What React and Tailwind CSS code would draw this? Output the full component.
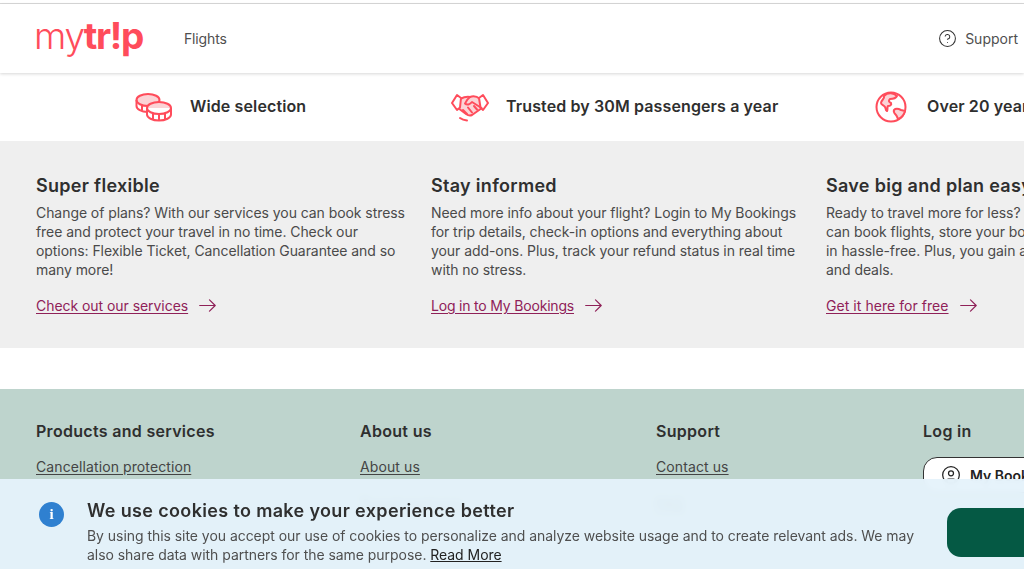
import React from "react";
import { CircleHelp, CircleUser } from "lucide-react";

const F = "font-['Inter','Liberation_Sans',sans-serif]";

function Coins() {
  return (
    <svg width="38" height="30" viewBox="0 0 38 30" fill="none" stroke="#ff4c5b" strokeWidth="2" strokeLinejoin="round">
      <ellipse cx="13" cy="8" rx="11.5" ry="6" fill="#fbd3d6" />
      <path d="M1.5 8v6c0 3.3 5 6 11 6 1 0 2 0 3-.2" />
      <path d="M7 13.5v5M13 14.5v5M19 13.5v2" />
      <ellipse cx="24" cy="16" rx="12" ry="6" fill="#fbd3d6" />
      <path d="M12 16v6.5c0 3.3 5.4 6 12 6s12-2.700 12-6V16" fill="#fff" />
      <path d="M12 16c0 3.300 5.400 6 12 6s12-2.700 12-6" />
      <path d="M18 21.500v6.500M24 22v6.500M30 21.500v6.500" />
    </svg>
  );
}

function Shake() {
  return (
    <svg width="38" height="30" viewBox="0 0 38 30" fill="none" stroke="#ff4c5b" strokeWidth="2" strokeLinejoin="round" strokeLinecap="round">
      <path d="M9 7c3-1.500 6-3 10-2 4-1.500 7-.5 10 2l2 9-10 7c-2 1-4 .5-6-1L7 16Z" fill="#fbd3d6" />
      <path d="M6 3 1 11l5 7 3-2.500L10 6ZM32 3l5 8-5 7-2.500-2.500L28 6Z" fill="#fff" />
      <path d="M19 5c-2 1.500-4 4-5 6.500 2 2 5 1 7-1.500l9.500 6" />
      <path d="M12 18l4 4M17 15.500l4 5M23 14l3 3.500" />
      <path d="M9 26c2 1.500 4 2.200 7 2.500" />
    </svg>
  );
}

function Globe() {
  return (
    <svg width="32" height="32" viewBox="0 0 32 32" fill="none" stroke="#ff4c5b" strokeWidth="2" strokeLinejoin="round">
      <circle cx="16" cy="16" r="14.500" />
      <path d="M9 5c1 3-3 4-3 7 0 2 3 2 4 4 1 1 0 3 2 4 1-2 0-4 1-5 2 0 4-1 3-3-2-1-3-2-1-4 3 0 6-1 7-3-3-3-9-4-13 0Z" fill="#fbd3d6" />
      <path d="M19 19c2-2 5-1 7 0l4 1c-1 4-4 7-7 8-1-2-1-3-2-4s-3-3-2-5Z" fill="#fbd3d6" />
    </svg>
  );
}

function Arrow() {
  return (
    <svg width="17" height="13" viewBox="0 0 17 13" fill="none" stroke="currentColor" strokeWidth="1.200" strokeLinecap="round" strokeLinejoin="round">
      <path d="M.7 6.500h15.500M10.500.8l5.700 5.700-5.700 5.700" />
    </svg>
  );
}

function Benefit({ className, icon, text }) {
  return (
    <div className={`flex shrink-0 items-center whitespace-nowrap ${className}`}>
      {icon}
      <span className="text-[16px] leading-[20px] font-semibold text-[#2f2f2f] tracking-[0.12px] -mt-[2px]">{text}</span>
    </div>
  );
}

function Info({ title, text, link, linkClass }) {
  return (
    <div className="w-[395px] shrink-0">
      <h3 className="text-[18px] leading-[24px] font-semibold text-[#2f2f2f] tracking-[0.3px] whitespace-nowrap">{title}</h3>
      <p className="mt-[5px] text-[14px] leading-[19px] text-[#4a4a4a] tracking-[-0.065px] whitespace-pre-line">{text}</p>
      <a className="mt-[17px] flex items-center gap-[11px] text-[14px] leading-[19px] text-[#8f2158]">
        <span className={`underline underline-offset-2 ${linkClass}`}>{link}</span>
        <Arrow />
      </a>
    </div>
  );
}

function FooterCol({ className, title, links }) {
  return (
    <div className={`shrink-0 ${className}`}>
      <h4 className="text-[16px] leading-[20px] font-semibold text-[#2f2f2f] tracking-[0.3px]">{title}</h4>
      <ul className="mt-[16px] flex flex-col gap-[18px] text-[14px] leading-[19px] text-[#444] tracking-[0.1px]">
        {links.map((l) => (
          <li key={l}><a className="underline underline-offset-2 whitespace-nowrap">{l}</a></li>
        ))}
      </ul>
    </div>
  );
}

export default function App() {
  return (
    <div className={`relative w-[1024px] h-[569px] overflow-hidden bg-white ${F}`}>
      <div className="h-[3px] bg-white" />
      <div className="h-px bg-[#d9d9d9]" />
      <header className="relative z-10 h-[69px] flex items-center pl-[34px] pr-[5px] bg-white shadow-[0_1px_3px_rgba(0,0,0,0.16)]">
        <div className="w-[150px] flex items-baseline text-[37px] leading-none text-[#ff4c5b] tracking-[-1.300px] pb-[6px]">
          <span className="font-light">my</span>
          <span className="font-bold">tr!p</span>
        </div>
        <span className="text-[14px] text-[#4f4f4f] tracking-[-0.15px]">Flights</span>
        <div className="ml-auto flex items-center gap-[8px] text-[14px] text-[#4f4f4f] pr-px">
          <CircleHelp className="w-[19px] h-[19px] text-[#333]" strokeWidth={1.300} />
          <span>Support</span>
        </div>
      </header>

      <div className="h-[68px] flex items-center whitespace-nowrap pl-[135px]">
        <Benefit className="w-[316px] gap-[17px]" icon={<Coins />} text="Wide selection" />
        <Benefit className="w-[424px] gap-[17px]" icon={<Shake />} text="Trusted by 30M passengers a year" />
        <Benefit className="gap-[20px]" icon={<Globe />} text="Over 20 years of experience" />
      </div>

      <section className="h-[207px] bg-[#efefef] pt-[33px] pl-[36px] flex">
        <Info
          title="Super flexible"
          text={"Change of plans? With our services you can book stress\nfree and protect your travel in no time. Check our\noptions: Flexible Ticket, Cancellation Guarantee and so\nmany more!"}
          link="Check out our services"
          linkClass="tracking-[-0.05px]"
        />
        <Info
          title="Stay informed"
          text={"Need more info about your flight? Login to My Bookings\nfor trip details, check-in options and everything about\nyour add-ons. Plus, track your refund status in real time\nwith no stress."}
          link="Log in to My Bookings"
          linkClass="tracking-[-0.19px]"
        />
        <Info
          title="Save big and plan easy"
          text={"Ready to travel more for less? With Prime you\ncan book flights, store your bookings and check\nin hassle-free. Plus, you gain access to perks\nand deals."}
          link="Get it here for free"
          linkClass="tracking-[0.05px]"
        />
      </section>

      <div className="h-[41px] bg-white" />

      <footer className="h-[180px] bg-[#bed4cd] pt-[32px] pl-[36px] flex">
        <FooterCol className="w-[324px]" title="Products and services" links={["Cancellation protection"]} />
        <FooterCol className="w-[296px]" title="About us" links={["About us", "Travel partners"]} />
        <FooterCol className="w-[267px]" title="Support" links={["Contact us", "FAQ"]} />
        <div className="shrink-0">
          <h4 className="text-[16px] leading-[20px] font-semibold text-[#2f2f2f] tracking-[0.3px]">Log in</h4>
          <div className="mt-[16px] w-[180px] h-[36px] rounded-[14px] border border-[#333] bg-white flex items-center gap-[9px] pl-[17px] text-[14px] font-semibold text-[#222]">
            <CircleUser className="w-[20px] h-[20px]" strokeWidth={1.500} />
            <span className="whitespace-nowrap">My Bookings</span>
          </div>
        </div>
      </footer>

      <div className="absolute left-0 right-0 top-[479px] h-[90px] bg-[#e5f2fb]/95 backdrop-blur-[3px] flex pl-[39px] pt-[20px]">
        <div className="mt-[3px] w-[25px] h-[25px] rounded-full bg-[#2f80d0] flex items-center justify-center text-white text-[15px] font-bold font-['Liberation_Serif',serif] leading-none">i</div>
        <div className="ml-[23px] w-[840px]">
          <h2 className="text-[18px] leading-[24px] font-semibold text-[#2f2f2f] tracking-[0.35px]">We use cookies to make your experience better</h2>
          <p className="mt-[3px] text-[14px] leading-[19px] text-[#4f4f4f] tracking-[-0.045px]">
            By using this site you accept our use of cookies to personalize and analyze website usage and to create relevant ads. We may
            also share data with partners for the same purpose. <a className="underline text-[#222]">Read More</a>
          </p>
        </div>
        <div className="absolute left-[947px] top-[29px] w-[140px] h-[49px] rounded-[14px] bg-[#055944]" />
      </div>
    </div>
  );
}
